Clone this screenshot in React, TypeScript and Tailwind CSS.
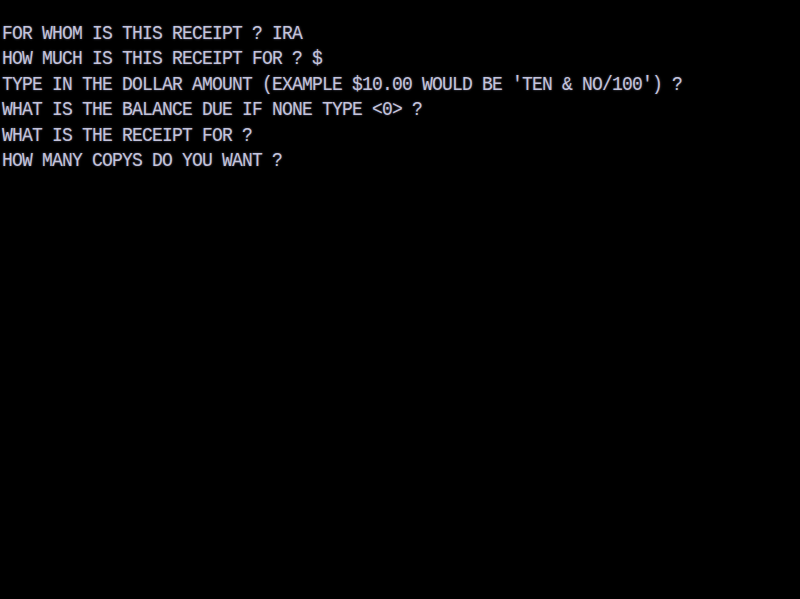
export default function App() {
  const lines = [
    "FOR WHOM IS THIS RECEIPT ? IRA",
    "HOW MUCH IS THIS RECEIPT FOR ? $",
    "TYPE IN THE DOLLAR AMOUNT (EXAMPLE $10.00 WOULD BE \u2032TEN & NO/100\u2032) ?",
    "WHAT IS THE BALANCE DUE IF NONE TYPE <0> ?",
    "WHAT IS THE RECEIPT FOR ?",
    "HOW MANY COPYS DO YOU WANT ?",
  ];
  return (
    <div className="w-[800px] h-[599px] bg-black overflow-hidden pt-[22px] pl-[2px]">
      {lines.map((l, i) => (
        <div
          key={i}
          className="whitespace-pre text-[18px] leading-[25.4px] tracking-[-0.8px] text-[#c4c4dc] font-['Liberation_Mono',monospace] [text-shadow:0_0_2px_rgba(190,190,230,0.5)] origin-[0_17px] scale-y-[1.12]"
        >
          {l}
        </div>
      ))}
    </div>
  );
}
